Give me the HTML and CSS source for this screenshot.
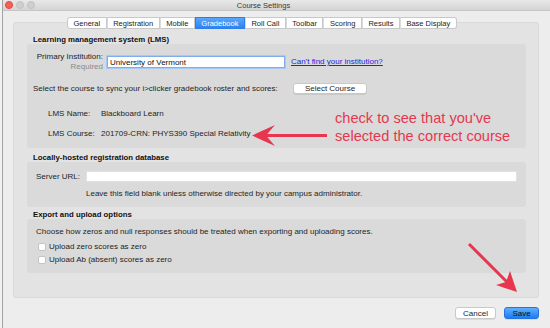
FILE: index.html
```html
<!DOCTYPE html>
<html lang="en">
<head>
  <meta charset="UTF-8">
  <title>Course Settings</title>
  <link rel="stylesheet" href="styles.css">
</head>
<body>
  <div class="window">
    <div class="titlebar">
      <div class="lights">
        <span class="light red"></span>
        <span class="light"></span>
        <span class="light"></span>
      </div>
      <div class="title">Course Settings</div>
    </div>

    <div class="tabs">
      <div class="tab">General</div>
      <div class="tab">Registration</div>
      <div class="tab">Mobile</div>
      <div class="tab active">Gradebook</div>
      <div class="tab">Roll Call</div>
      <div class="tab">Toolbar</div>
      <div class="tab">Scoring</div>
      <div class="tab">Results</div>
      <div class="tab">Base Display</div>
    </div>

    <div class="panel">
      <div class="section-title">Learning management system (LMS)</div>
      <div class="group lms">
        <div class="inst-row">
          <div class="inst-label">Primary Institution:<br><span class="req">Required</span></div>
          <input class="text-input focused inst-input" type="text" value="University of Vermont">
          <a class="link" href="#">Can't find your institution?</a>
        </div>
        <div class="course-row">
          <span class="course-text">Select the course to sync your i&gt;clicker gradebook roster and scores:</span>
          <button class="btn select-btn">Select Course</button>
        </div>
        <div class="info-grid">
          <span>LMS Name:</span><span>Blackboard Learn</span>
          <span>LMS Course:</span><span>201709-CRN: PHYS390 Special Relativity</span>
        </div>

        <!-- annotation -->
        <svg class="note-arrow" width="76" height="22" viewBox="0 0 76 22">
          <line x1="13" y1="10.5" x2="75" y2="10.5" stroke="#e8364f" stroke-width="3"/>
          <path d="M0 10.5 L23 0 L14 10.5 L23 21 Z" fill="#e8364f"/>
        </svg>
        <div class="note">check to see that you've<br>selected the correct course</div>
      </div>

      <div class="section-title second">Locally-hosted registration database</div>
      <div class="group server">
        <div class="url-row">
          <span class="url-label">Server URL:</span>
          <input class="text-input url-input" type="text" value="">
        </div>
        <div class="hint">Leave this field blank unless otherwise directed by your campus administrator.</div>
      </div>

      <div class="section-title third">Export and upload options</div>
      <div class="group export">
        <div>Choose how zeros and null responses should be treated when exporting and uploading scores.</div>
        <div class="check-row first"><span class="check"></span>Upload zero scores as zero</div>
        <div class="check-row"><span class="check"></span>Upload Ab (absent) scores as zero</div>
      </div>
    </div>

    <div class="actions">
      <button class="btn cancel-btn">Cancel</button>
      <button class="btn save-btn">Save</button>
    </div>

    <svg class="save-arrow" width="60" height="58" viewBox="0 0 60 58">
      <line x1="7" y1="6" x2="45" y2="44" stroke="#e8364f" stroke-width="3"/>
      <path d="M55 54 L34 47 L44 44 L48 33 Z" fill="#e8364f"/>
    </svg>
  </div>
</body>
</html>
```

FILE: styles.css
```css
html, body {
  margin: 0;
  padding: 0;
}
body {
  width: 550px;
  height: 328px;
  overflow: hidden;
  background-color: #f1f1f1;
  font-family: "Liberation Sans", Arial, sans-serif;
  font-size: 8px;
  color: #1e1e1e;
}
.window {
  position: relative;
  height: 328px;
  margin-left: 2px;
  border-left: 1px solid #a2a2a2;
  background-color: #ededed;
}

/* title bar */
.titlebar {
  height: 10px;
  display: flex;
  align-items: center;
  background: linear-gradient(#e8e8e8, #d4d4d4);
  border-bottom: 1px solid #c6c6c6;
}
.lights {
  display: flex;
  gap: 3px;
  margin-left: 2px;
  width: 60px;
}
.light {
  width: 8px;
  height: 8px;
  border-radius: 50%;
  background-color: #cfcfcf;
  box-sizing: border-box;
  border: 1px solid #c2c2c2;
}
.light.red {
  background-color: #fc5f57;
  border-color: #e2463f;
}
.title {
  flex: 1;
  text-align: center;
  padding-right: 88px;
  color: #3a3a3a;
  font-size: 7.5px;
}

/* tabs */
.tabs {
  position: relative;
  z-index: 1;
  display: flex;
  margin-top: 6px;
  margin-left: 64px;
  height: 12px;
}
.tab {
  height: 12px;
  line-height: 11px;
  box-sizing: border-box;
  padding: 0 5.5px;
  background-color: #fff;
  border: 1px solid #c8c8c8;
  border-left: 1px solid #dadada;
  color: #222;
  font-size: 7.5px;
}
.tab:first-child {
  border-left: 1px solid #c8c8c8;
  border-radius: 3px 0 0 3px;
}
.tab:last-child {
  border-radius: 0 3px 3px 0;
}
.tab.active {
  background: linear-gradient(#5aa6fb, #2b84f5);
  border-color: #2e7ee6;
  color: #fff;
}

/* panel */
.panel {
  height: 276px;
  box-sizing: border-box;
  margin: -7px 11px 0 10px;
  padding-top: 12px;
  background-color: #e3e3e3;
  border: 1px solid #d9d9d9;
  border-radius: 3px;
}
.section-title {
  padding-left: 19px;
  line-height: 9px;
  font-weight: bold;
  font-size: 7.8px;
  color: #111;
}
.section-title.second { margin-top: 5px; }
.section-title.third { margin-top: 3px; }
.group {
  margin: 0 12px 0 13px;
  background-color: #dadada;
  border-radius: 3px;
  line-height: 10px;
}

.text-input {
  box-sizing: border-box;
  margin: 0;
  padding: 0 2px;
  background-color: #fff;
  border: 1px solid #c6c6c6;
  font-family: inherit;
  font-size: 8px;
  color: #111;
  outline: none;
}
.text-input.focused {
  border: 1px solid #7eaef0;
  box-shadow: 0 0 0 1px #a9c9f5;
}
.btn {
  box-sizing: border-box;
  margin: 0;
  padding: 0;
  background-color: #fff;
  border: 1px solid #c9c9c9;
  border-radius: 3px;
  font-family: inherit;
  font-size: 8px;
  color: #1e1e1e;
  box-shadow: 0 1px 0 rgba(0, 0, 0, 0.08);
}

/* LMS box */
.lms {
  position: relative;
  padding: 8px 0 9px 0;
}
.inst-row {
  display: flex;
  align-items: flex-start;
}
.inst-label {
  width: 76px;
  text-align: right;
}
.req {
  color: #8a8a8a;
}
.inst-input {
  width: 178px;
  height: 12px;
  margin-left: 4px;
  margin-top: 4px;
}
.link {
  margin-left: 6px;
  margin-top: 5px;
  color: #2424e0;
  text-decoration: underline;
}
.course-row {
  display: flex;
  align-items: center;
  margin-top: 11px;
  padding-left: 6px;
}
.course-text {
  width: 260px;
}
.select-btn {
  width: 74px;
  height: 11px;
}
.info-grid {
  display: grid;
  grid-template-columns: 53px auto;
  row-gap: 10px;
  margin-top: 15px;
  padding-left: 21px;
}
.note-arrow {
  position: absolute;
  left: 225px;
  top: 81px;
}
.note {
  position: absolute;
  left: 308px;
  top: 65px;
  font-size: 14.6px;
  line-height: 18px;
  color: #e6374f;
  white-space: nowrap;
}

/* server box */
.server {
  padding: 9px 0 8px 9px;
}
.url-row {
  display: flex;
  align-items: center;
}
.url-label {
  width: 50px;
}
.url-input {
  flex: 1;
  height: 11px;
  margin-right: 9px;
  border-color: #e0e0e0;
}
.hint {
  margin-top: 7px;
  padding-left: 50px;
}

/* export box */
.export {
  padding: 8px 0 8px 9px;
}
.check-row {
  display: flex;
  align-items: center;
  margin-top: 3px;
  padding-left: 2px;
}
.check-row.first {
  margin-top: 5px;
}
.check {
  width: 8px;
  height: 8px;
  box-sizing: border-box;
  margin-right: 3px;
  background-color: #fff;
  border: 1px solid #c4c4c4;
  border-radius: 2px;
}

/* bottom buttons */
.actions {
  display: flex;
  justify-content: flex-end;
  gap: 8px;
  margin: 9px 11px 0 0;
}
.cancel-btn {
  width: 41px;
  height: 12px;
}
.save-btn {
  width: 35px;
  height: 12px;
  background: linear-gradient(#62aefc, #1b7cf4);
  border-color: #2673de;
  color: #0d0d0d;
}
.save-arrow {
  position: absolute;
  left: 459px;
  top: 238px;
}
```
